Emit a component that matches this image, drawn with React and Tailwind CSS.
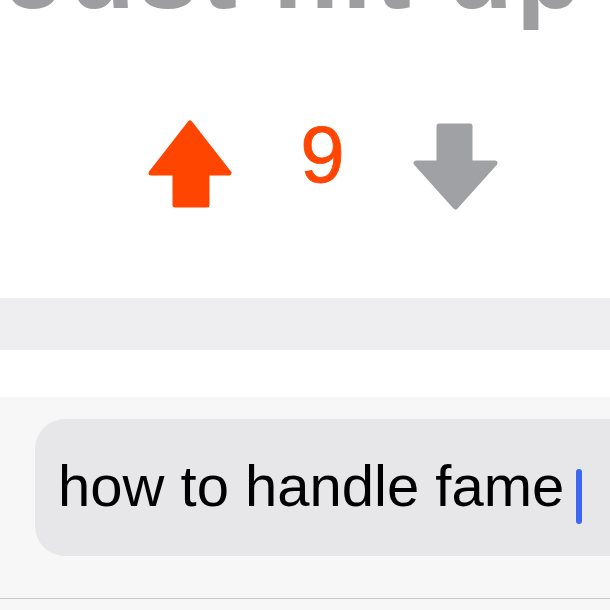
export default function App() {
  return (
    <div className="h-[610px] w-[610px] overflow-hidden bg-white font-['Liberation_Sans',Arial,sans-serif]">
      <div className="h-[298px] overflow-hidden bg-white">
        <div className="-mt-[83px] ml-[6px] whitespace-nowrap text-[108px] font-bold leading-none tracking-[3px] text-[#9e9ea0]">
          Just hit up the
        </div>

        <div className="mt-[95px] flex items-start pl-[148px]">
          <svg width="84" height="88" viewBox="0 0 84 88" aria-label="Upvote">
            <path
              d="M42 3 L81 53 L59 53 L59 85 L27 85 L27 53 L3 53 Z"
              fill="#ff4500"
              stroke="#ff4500"
              strokeWidth="5"
              strokeLinejoin="round"
            />
          </svg>
          <span className="-mt-[5px] w-[181px] text-center text-[80px] leading-none text-[#ff4500] [-webkit-text-stroke:0.8px_#ff4500]">
            9
          </span>
          <svg className="mt-[3px]" width="85" height="87" viewBox="0 0 85 87" aria-label="Downvote">
            <path
              d="M26 3 L57 3 L57 40 L82 40 L42.5 84 L3 40 L26 40 Z"
              fill="#a0a1a4"
              stroke="#a0a1a4"
              strokeWidth="5"
              strokeLinejoin="round"
            />
          </svg>
        </div>
      </div>

      <div className="h-[52px] bg-[#eeeef0]" />
      <div className="h-[47px] bg-white" />

      <div className="h-[201px] overflow-hidden bg-[#f7f7f7] pt-[22px]">
        <div className="-mr-[40px] ml-[35px] flex h-[137px] items-start rounded-[30px] bg-[#e7e7e9] pl-[23px] pt-[38px]">
          <span className="whitespace-nowrap text-[58px] leading-none text-black">how to handle fame</span>
          <span className="ml-[12px] mt-[12px] h-[55px] w-[6px] rounded-full bg-[#3d67f2]" />
        </div>
      </div>
      <div className="h-[12px] border-t border-[#c8c8cc] bg-[#f7f7f7]" />
    </div>
  );
}
